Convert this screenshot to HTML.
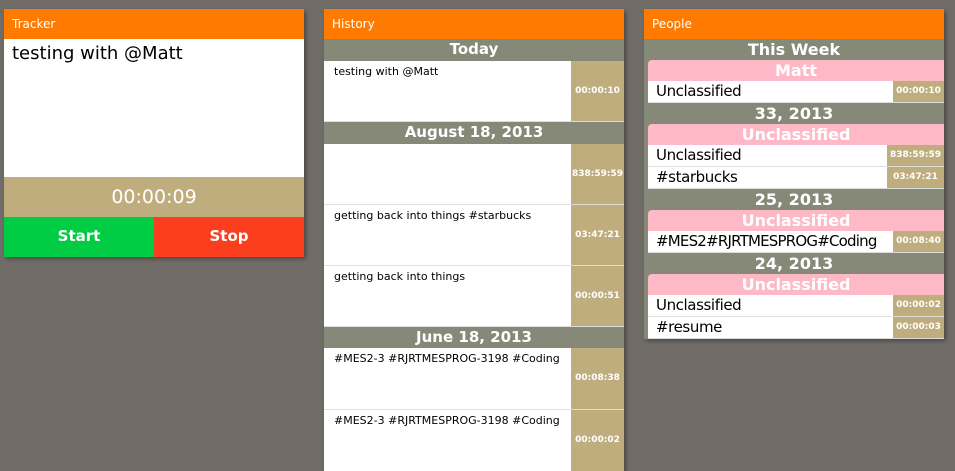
<!DOCTYPE html>
<html><head><meta charset="utf-8"><style>
*{margin:0;padding:0;box-sizing:border-box}
html,body{width:955px;height:471px;overflow:hidden}
body{background:#716c67;font-family:"DejaVu Sans","Liberation Sans",sans-serif;position:relative}
div{position:absolute}
.p{box-shadow:2px 2px 4px rgba(0,0,0,.35)}
.h{background:#ff7a00;color:#fff;font-size:12px;line-height:30px;padding-left:8px;height:30px;left:0;right:0;top:0}
.g{background:#868878;color:#fff;font-weight:bold;text-align:center;left:0;right:0}
.w{background:#fff;left:0;right:0;border-bottom:1px solid #ddd}
.t{background:#bfad7e;color:#fff;font-size:9px;font-weight:bold;text-align:center}
.pk{background:#ffb9c6;color:#fff;font-weight:bold;text-align:center;font-size:16px;line-height:21px;left:4px;right:0;border-top-left-radius:4px}
.pp .w{font-size:15px;letter-spacing:-0.4px}
</style></head><body>
<!-- Tracker -->
<div class="p" style="left:4px;top:9px;width:300px;height:248px;background:#fff">
<div class="h">Tracker</div>
<div style="left:8px;top:34px;font-size:18px;color:#000">testing with @Matt</div>
<div style="left:0;right:0;top:168px;height:40px;background:#bfad7e;color:#fff;font-size:19px;text-align:center;line-height:40px">00:00:09</div>
<div style="left:0;width:150px;top:208px;height:40px;background:#00cc44;color:#fff;font-weight:bold;font-size:15px;text-align:center;line-height:38px">Start</div>
<div style="left:150px;width:150px;top:208px;height:40px;background:#fa3e1e;color:#fff;font-weight:bold;font-size:15px;text-align:center;line-height:38px">Stop</div>
</div>
<!-- History -->
<div class="p" style="left:324px;top:9px;width:300px;height:470px;background:#fff;font-size:11px">
<div class="h">History</div>
<div class="g" style="top:30px;height:22px;line-height:21px;font-size:15px">Today</div>
<div class="w" style="top:52px;height:61px"><div style="left:10px;top:4px">testing with @Matt</div><div class="t" style="left:247px;right:0;top:0;height:60px;line-height:60px">00:00:10</div></div>
<div class="g" style="top:113px;height:22px;line-height:21px;font-size:15px">August 18, 2013</div>
<div class="w" style="top:135px;height:61px"><div class="t" style="left:247px;right:0;top:0;height:60px;line-height:60px">838:59:59</div></div>
<div class="w" style="top:196px;height:61px"><div style="left:10px;top:4px">getting back into things #starbucks</div><div class="t" style="left:247px;right:0;top:0;height:60px;line-height:60px">03:47:21</div></div>
<div class="w" style="top:257px;height:61px"><div style="left:10px;top:4px">getting back into things</div><div class="t" style="left:247px;right:0;top:0;height:60px;line-height:60px">00:00:51</div></div>
<div class="g" style="top:318px;height:21px;line-height:21px;font-size:15px">June 18, 2013</div>
<div class="w" style="top:339px;height:62px"><div style="left:10px;top:4px">#MES2-3 #RJRTMESPROG-3198 #Coding</div><div class="t" style="left:247px;right:0;top:0;height:61px;line-height:61px">00:08:38</div></div>
<div class="w" style="top:401px;height:62px"><div style="left:10px;top:4px">#MES2-3 #RJRTMESPROG-3198 #Coding</div><div class="t" style="left:247px;right:0;top:0;height:61px;line-height:61px">00:00:02</div></div>
</div>
<!-- People -->
<div class="p pp" style="left:644px;top:9px;width:300px;height:330px;background:#868878;font-size:15px">
<div class="h">People</div>
<div class="g" style="top:30px;height:21px;line-height:21px;font-size:16px">This Week</div>
<div class="pk" style="top:51px;height:21px">Matt</div>
<div class="w" style="top:72px;height:22px;left:4px"><div style="left:8px;top:1px">Unclassified</div><div class="t" style="left:245px;right:0;top:0;height:21px;line-height:21px;letter-spacing:0">00:00:10</div></div>
<div class="g" style="top:94px;height:21px;line-height:21px;font-size:16px">33, 2013</div>
<div class="pk" style="top:115px;height:21px">Unclassified</div>
<div class="w" style="top:136px;height:22px;left:4px"><div style="left:8px;top:1px">Unclassified</div><div class="t" style="left:239px;right:0;top:0;height:21px;line-height:21px;letter-spacing:0">838:59:59</div></div>
<div class="w" style="top:158px;height:22px;left:4px"><div style="left:8px;top:1px">#starbucks</div><div class="t" style="left:239px;right:0;top:0;height:21px;line-height:21px;letter-spacing:0">03:47:21</div></div>
<div class="g" style="top:180px;height:21px;line-height:21px;font-size:16px">25, 2013</div>
<div class="pk" style="top:201px;height:21px">Unclassified</div>
<div class="w" style="top:222px;height:22px;left:4px"><div style="left:8px;top:1px;letter-spacing:-0.8px">#MES2#RJRTMESPROG#Coding</div><div class="t" style="left:245px;right:0;top:0;height:21px;line-height:21px;letter-spacing:0">00:08:40</div></div>
<div class="g" style="top:244px;height:21px;line-height:21px;font-size:16px">24, 2013</div>
<div class="pk" style="top:265px;height:21px">Unclassified</div>
<div class="w" style="top:286px;height:22px;left:4px"><div style="left:8px;top:1px">Unclassified</div><div class="t" style="left:245px;right:0;top:0;height:21px;line-height:21px;letter-spacing:0">00:00:02</div></div>
<div class="w" style="top:308px;height:22px;left:4px"><div style="left:8px;top:1px">#resume</div><div class="t" style="left:245px;right:0;top:0;height:21px;line-height:21px;letter-spacing:0">00:00:03</div></div>
</div>
</body></html>
